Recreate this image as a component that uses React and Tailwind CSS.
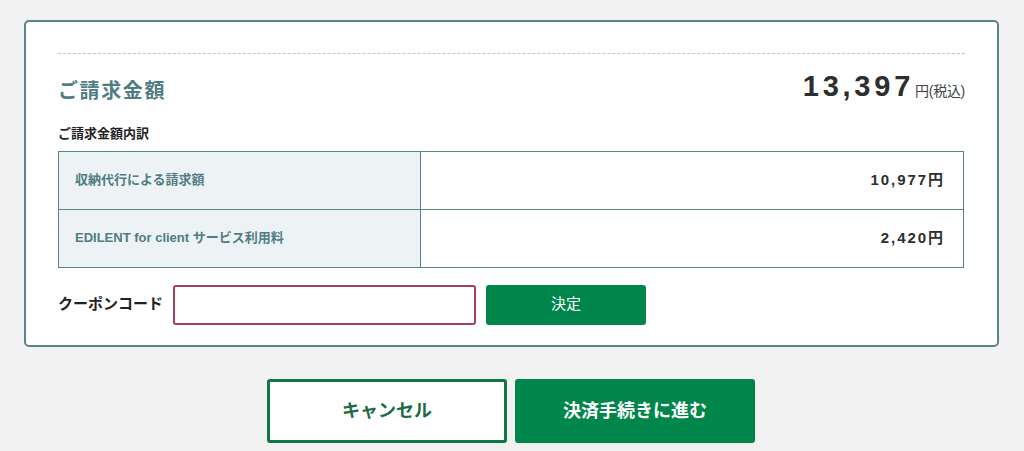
import React, { useState } from "react";

const rows = [
  { label: "収納代行による請求額", amount: "10,977" },
  { label: "EDILENT for client サービス利用料", amount: "2,420" },
];

export default function App() {
  const [coupon, setCoupon] = useState("");

  return (
    <div
      className="min-h-[451px] bg-[#f2f2f2] pt-[20px] px-[24px] text-[#333]"
      style={{ fontFamily: '"Liberation Sans", "Noto Sans CJK JP", sans-serif' }}
    >
      {/* Summary card */}
      <div className="w-[975px] h-[327px] bg-white border-2 border-[#5b8489] rounded-[5px] px-[32px] pt-[31px]">
        <div className="border-t border-dashed border-[#bfc5c6]" />

        <div className="flex items-end justify-between mt-[12px] h-[36px]">
          <h2 className="text-[20px] font-bold tracking-[0.08em] text-[#4f7d83] leading-none mb-[1px]">
            ご請求金額
          </h2>
          <p className="flex items-baseline">
            <span className="text-[29px] font-bold tracking-[0.13em] text-[#2e2e2e] leading-none">
              13,397
            </span>
            <span className="text-[14px] text-[#444] ml-[1px] tracking-[-0.02em]">円(税込)</span>
          </p>
        </div>

        <p className="text-[13px] font-bold mt-[22px] text-[#222]">ご請求金額内訳</p>

        {/* Breakdown */}
        <table className="w-[906px] mt-[7px] border-collapse border border-[#5b8489]">
          <tbody>
            {rows.map((r) => (
              <tr key={r.label} className="h-[58px]">
                <th className="w-[362px] border border-[#5b8489] bg-[#edf3f4] text-left font-bold text-[13px] text-[#4f7d83] pl-[16px]">
                  {r.label}
                </th>
                <td className="border border-[#5b8489] text-right pr-[18px] text-[15px] font-bold tracking-[0.13em] text-[#2e2e2e]">
                  {r.amount}円
                </td>
              </tr>
            ))}
          </tbody>
        </table>

        {/* Coupon */}
        <div className="flex items-center mt-[17px]">
          <label className="text-[15px] font-bold text-[#222] w-[115px]">クーポンコード</label>
          <input
            value={coupon}
            onChange={(e) => setCoupon(e.target.value)}
            className="w-[303px] h-[40px] border-2 border-[#a3405c] rounded-[3px] px-2 outline-none"
          />
          <button className="ml-[10px] w-[160px] h-[40px] bg-[#00864a] rounded-[3px] text-white text-[15px]">
            決定
          </button>
        </div>
      </div>

      {/* Actions */}
      <div className="flex justify-center gap-[8px] mt-[32px] pr-[2px]">
        <button className="w-[240px] h-[64px] bg-white border-[3px] border-[#0b7a46] rounded-[3px] text-[#1d6b45] text-[18px] font-bold">
          キャンセル
        </button>
        <button className="w-[240px] h-[64px] bg-[#00864a] rounded-[3px] text-white text-[18px] font-bold">
          決済手続きに進む
        </button>
      </div>
    </div>
  );
}
